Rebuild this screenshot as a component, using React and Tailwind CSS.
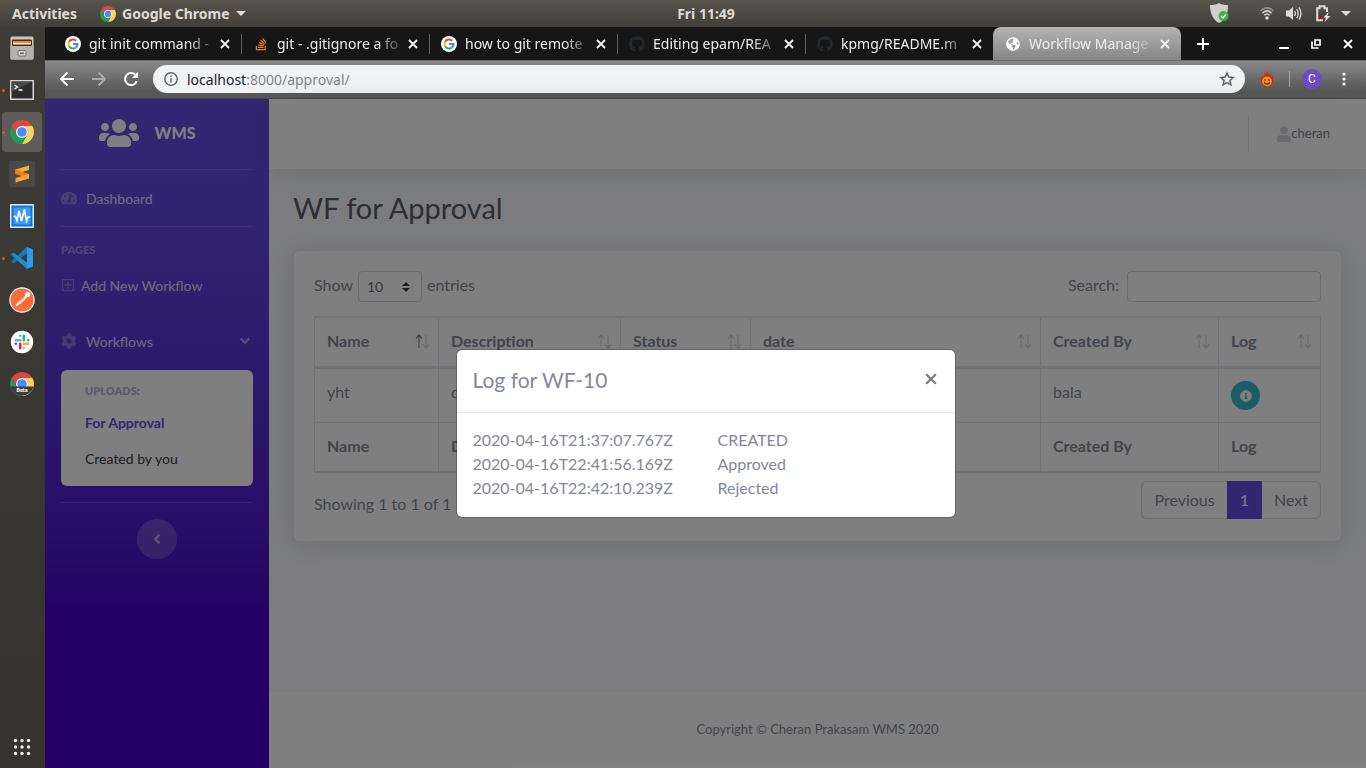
import React from "react";
import {
  FaUsers, FaTachometerAlt, FaCog, FaAngleDown, FaAngleLeft, FaInfoCircle, FaUser,
  FaRegPlusSquare, FaStackOverflow, FaGithub, FaGlobeAmericas,
} from "react-icons/fa";

function ChromeLogo({ className, beta }) {
  const arc = "M-17.32-10A20 20 0 0 1 17.32-10L0-10A10 10 0 0 0-8.66 5Z";
  return (
    <svg viewBox="-20 -20 40 40" className={className} aria-hidden="true">
      <path d={arc} fill="#d94a3e" />
      <path d={arc} fill="#fdd35c" transform="rotate(120)" />
      <path d={arc} fill="#229a58" transform="rotate(240)" />
      <circle r="10" fill="#fff" />
      <circle r="8" fill="#4c8bf5" />
      {beta && (
        <g>
          <path d="M-19.4 4H19.4A20 20 0 0 1-19.4 4Z" fill="#3c3c3c" />
          <text x="0" y="14" fontSize="9" fontWeight="700" fill="#fff" textAnchor="middle" fontFamily="Roboto, sans-serif">Beta</text>
        </g>
      )}
    </svg>
  );
}

function GoogleIcon() {
  return (
    <svg viewBox="0 0 16 16" className="size-4" aria-hidden="true">
      <circle cx="8" cy="8" r="8" fill="#fff" />
      <g fill="none" strokeWidth="2">
        <path d="M4.1 5.7A4.6 4.6 0 0 1 11.2 4.7" stroke="#ea4335" />
        <path d="M4.1 10.3A4.6 4.6 0 0 1 4.1 5.7" stroke="#fbbc05" />
        <path d="M11 11.5A4.6 4.6 0 0 1 4.1 10.3" stroke="#34a853" />
        <path d="M8 8H12.6A4.6 4.6 0 0 1 11 11.5" stroke="#4285f4" />
      </g>
    </svg>
  );
}

function CloseIcon({ className }) {
  return (
    <svg viewBox="0 0 10 10" className={className} fill="none" stroke="currentColor" strokeWidth="1.9" aria-hidden="true">
      <path d="M1 1L9 9M9 1L1 9" />
    </svg>
  );
}

const tabs = [
  { title: "git init command -", icon: <GoogleIcon /> },
  { title: "git - .gitignore a fo", icon: <FaStackOverflow className="size-3.5 text-[#f48024]" /> },
  { title: "how to git remote", icon: <GoogleIcon /> },
  { title: "Editing epam/REA", icon: <FaGithub className="size-4 text-[#24292e]" /> },
  { title: "kpmg/README.m", icon: <FaGithub className="size-4 text-[#24292e]" /> },
];

function Tab({ tab, active, separator }) {
  const look = active ? "rounded-t-lg bg-linear-to-b from-[#b4b4b4] to-[#868686]" : "";
  return (
    <div className={"relative flex w-[188px] min-w-0 items-center pl-3 pr-[11px] " + look}>
      <span className="flex size-4 shrink-0 items-center justify-center">{tab.icon}</span>
      <span className="ml-2 min-w-0 flex-1 overflow-hidden whitespace-nowrap mask-r-from-80% mask-r-to-105% text-[14px] text-[#eeeeee]">
        {tab.title}
      </span>
      <button type="button" aria-label="Close tab" className="ml-2 shrink-0 text-[#eeeeee]">
        <CloseIcon className="size-2.5" />
      </button>
      {separator && <span className="absolute -right-px h-5 w-px bg-[#606060]" />}
    </div>
  );
}

function SystemBar() {
  return (
    <header className="flex h-[27px] items-center bg-linear-to-b from-[#58554d] to-[#403e39] px-3 text-[14px] font-bold text-[#dfdbd2]">
      <div className="flex flex-1 items-center">
        <button type="button" className="font-bold">Activities</button>
        <button type="button" className="ml-[23px] flex items-center font-bold">
          <ChromeLogo className="size-4" />
          <span className="ml-1.5">Google Chrome</span>
          <svg viewBox="0 0 10 5" className="ml-1.5 h-[5px] w-2.5" fill="currentColor" aria-hidden="true"><path d="M0 0H10L5 5Z" /></svg>
        </button>
      </div>
      <time className="pl-[46px]">Fri 11:49</time>
      <div className="flex flex-1 items-center justify-end">
        <svg viewBox="0 0 20 21" className="h-[21px] w-5" aria-hidden="true">
          <path d="M9 0C11 1.6 14 2 18 2C18 10 16 17 9 20C3 17 0 10 0 2C4 2 7 1.6 9 0Z" fill="#d2d0cc" />
          <circle cx="13.5" cy="13" r="5" fill="#39b54a" />
          <path d="M11 13L13 15L16 11.5" fill="none" stroke="#fff" strokeWidth="1.2" />
        </svg>
        <svg viewBox="0 0 14 13" className="ml-[30px] h-[13px] w-3.5" fill="none" stroke="currentColor" strokeWidth="1.6" aria-hidden="true">
          <path d="M0.5 4Q7-2.4 13.5 4" opacity=".45" />
          <path d="M2.4 6.2Q7 1.6 11.6 6.2" /><path d="M4.3 8.3Q7 5.6 9.7 8.3" />
          <circle cx="7" cy="11" r="1.8" fill="currentColor" stroke="none" />
        </svg>
        <svg viewBox="0 0 16 15" className="ml-3 h-[15px] w-4" fill="none" stroke="currentColor" strokeWidth="1.3" aria-hidden="true">
          <path d="M0 4.5H3L7 1V14L3 10.5H0Z" fill="currentColor" stroke="none" />
          <path d="M8.6 5Q10.2 7.5 8.6 10M10.8 3Q13.6 7.5 10.8 12M13 1.4Q16.8 7.5 13 13.6" />
        </svg>
        <svg viewBox="0 0 15 17" className="ml-3.5 h-[17px] w-[15px]" aria-hidden="true">
          <path d="M7 15.2H1.2V3.2H3.5V1.2H8.5V3.2H11V7" fill="none" stroke="currentColor" strokeWidth="2" />
          <rect x="3" y="11" width="4" height="2.5" fill="#d40000" />
          <path d="M12.5 7L7.5 12.5H10L8.5 17L14.5 11H11.5Z" fill="currentColor" />
        </svg>
        <svg viewBox="0 0 10 5" className="ml-2.5 mr-[3px] h-[5px] w-2.5" fill="currentColor" aria-hidden="true"><path d="M0 0H10L5 5Z" /></svg>
      </div>
    </header>
  );
}

const dockApps = [
  {
    name: "Files",
    icon: (
      <svg viewBox="0 0 24 24" className="size-6">
        <rect x=".5" y=".5" width="23" height="23" rx="1.5" fill="#c9c7c4" />
        <rect x="2" y="3.5" width="20" height="6.5" rx="1" fill="#4d2a1a" />
        <path d="M3 5H21V7H3Z" fill="#f6853d" /><path d="M3 7H21V8.5H3Z" fill="#fff1e0" />
        <path d="M0.5 10H23.5V22Q23.5 23.5 22 23.5H2Q.5 23.5 .5 22Z" fill="#b5b3b0" />
        <rect x="8" y="14.5" width="8" height="5.5" rx="1" fill="#d9d9d9" stroke="#6e6e6e" /><path d="M10 17.3H14" stroke="#555" strokeWidth="1.3" />
      </svg>
    ),
  },
  {
    name: "Terminal", running: true,
    icon: (
      <svg viewBox="0 0 24 20" className="h-5 w-6">
        <rect width="24" height="20" fill="#d7d7d7" /><rect x="1.5" y="1.5" width="21" height="17" fill="#2c2c2c" />
        <path d="M1.5 1.5H22.5L1.5 12Z" fill="#4a4a4a" />
        <path d="M4.5 5L7.5 7L4.5 9M8.5 10H12.5" fill="none" stroke="#fff" strokeWidth="1.4" />
      </svg>
    ),
  },
  { name: "Google Chrome", running: true, active: true, icon: <ChromeLogo className="size-6" /> },
  {
    name: "Sublime Text",
    icon: (
      <svg viewBox="0 0 26 26" className="size-[26px]">
        <rect width="26" height="26" rx="2" fill="#494949" />
        <path d="M20 4.5L6.5 8.5V13L20 9Z" fill="#ffab30" /><path d="M6.5 8.5V13L20 17.5V13Z" fill="#e8861b" /><path d="M20 13V17.5L6.5 21.5V17Z" fill="#ffa22a" />
      </svg>
    ),
  },
  {
    name: "System Monitor",
    icon: (
      <svg viewBox="0 0 24 24" className="size-6">
        <rect width="24" height="24" rx="1" fill="#dcecff" /><rect x="1.5" y="1.5" width="21" height="21" fill="#1272dc" />
        <rect x="3.5" y="3.5" width="17" height="17" fill="#3d9bf3" />
        <path d="M3.5 12.5H5.5L7 16.5L9 7L11.5 17L14.5 5.5L16.5 17L18 13H20.5" fill="none" stroke="#fff" strokeWidth="1.6" />
      </svg>
    ),
  },
  {
    name: "Visual Studio Code", running: true,
    icon: (
      <svg viewBox="0 0 24 24" className="size-6">
        <path d="M17 1L23 3.5V20.5L17 23L6 12Z" fill="#2f9be8" />
        <path d="M17 7V17L10.5 12Z" fill="#3b3a35" />
        <path d="M17 1V7L3.5 17.5L1 15.5Z" fill="#1478bd" /><path d="M17 23V17L3.5 6.5L1 8.5Z" fill="#1f8bd4" />
      </svg>
    ),
  },
  {
    name: "Postman",
    icon: (
      <svg viewBox="0 0 26 26" className="size-[26px]">
        <circle cx="13" cy="13" r="12.7" fill="#fff" /><circle cx="13" cy="13" r="11.6" fill="#fb6b3b" />
        <path d="M6 20L9 15L16 9L18 10.5L11 17Z" fill="#fff" /><circle cx="18.5" cy="7.5" r="2.6" fill="#fff" />
        <path d="M9 16L15 11" stroke="#fb6b3b" strokeWidth=".8" />
      </svg>
    ),
  },
  {
    name: "Slack",
    icon: (
      <svg viewBox="0 0 24 24" className="size-6">
        <circle cx="12" cy="12" r="11.2" fill="#fff" />
        <g strokeWidth="2.6" strokeLinecap="round">
          <path d="M10.2 5.8V5.81M5.8 10.2H10.2" stroke="#36c5f0" />
          <path d="M18.2 10.2H18.21M13.8 5.8V10.2" stroke="#2eb67d" />
          <path d="M13.8 18.2V18.21M13.8 13.8H18.2" stroke="#ecb22e" />
          <path d="M5.8 13.8H5.81M10.2 13.8V18.2" stroke="#e01e5a" />
        </g>
      </svg>
    ),
  },
  { name: "Google Chrome Beta", icon: <ChromeLogo className="size-6" beta /> },
];

function Dock() {
  return (
    <nav aria-label="Dock" className="flex w-[45px] shrink-0 flex-col items-center bg-linear-to-b from-[#3d3c37] to-[#34332e] pb-2.5 pr-px">
      <div className="flex flex-col gap-0.5 pt-px">
        {dockApps.map((app) => (
          <button
            key={app.name}
            type="button"
            aria-label={app.name}
            className={"relative flex size-10 items-center justify-center rounded " + (app.active ? "bg-[#5d5c58]" : "")}
          >
            {app.running && <span className="absolute left-0 size-[3px] rounded-full bg-[#e95420]" />}
            {app.icon}
          </button>
        ))}
      </div>
      <button type="button" aria-label="Show applications" className="mt-auto">
        <svg viewBox="0 0 22 22" className="size-[22px]" fill="#f2f2f2">
          {[4.5, 11, 17.5].map((y) => [4.5, 11, 17.5].map((x) => <circle key={x + "-" + y} cx={x} cy={y} r="1.7" />))}
        </svg>
      </button>
    </nav>
  );
}

function BrowserChrome() {
  return (
    <div>
      <div className="flex h-[33px] bg-[#161616] pl-2">
        {tabs.map((tab, i) => <Tab key={tab.title} tab={tab} separator={i < 4} />)}
        <Tab active tab={{ title: "Workflow Manage", icon: <FaGlobeAmericas className="size-3.5 text-white" /> }} />
        <div className="flex flex-1 items-center pl-4 pr-3 text-white">
          <button type="button" aria-label="New tab">
            <svg viewBox="0 0 12 12" className="size-3" stroke="currentColor" strokeWidth="2"><path d="M6 0V12M0 6H12" /></svg>
          </button>
          <div className="ml-auto flex items-center gap-[22px]">
            <button type="button" aria-label="Minimize">
              <svg viewBox="0 0 10 10" className="size-2.5" stroke="currentColor" strokeWidth="2"><path d="M0 9H10" /></svg>
            </button>
            <button type="button" aria-label="Restore">
              <svg viewBox="0 0 10 10" className="size-2.5" fill="none" stroke="currentColor" strokeWidth="1.7"><path d="M4 1H9V6H4ZM1 2.5V9H7.5" /></svg>
            </button>
            <button type="button" aria-label="Close window" className="mr-px"><CloseIcon className="size-2.5" /></button>
          </div>
        </div>
      </div>
      <div className="flex h-[39px] items-center border-b border-[#454545] border-t border-t-[#6a6a6a] bg-linear-to-b from-[#8a8a8a] to-[#585858] to-80% pl-[14px] pr-5 pb-px">
        <div className="flex gap-4 text-white">
          <button type="button" aria-label="Back">
            <svg viewBox="0 0 16 16" className="size-4" fill="none" stroke="currentColor" strokeWidth="2"><path d="M15 8H2M8.5 1.5L2 8L8.5 14.5" /></svg>
          </button>
          <button type="button" aria-label="Forward" className="text-[#a9a9a9]">
            <svg viewBox="0 0 16 16" className="size-4" fill="none" stroke="currentColor" strokeWidth="2"><path d="M1 8H14M7.5 1.5L14 8L7.5 14.5" /></svg>
          </button>
          <button type="button" aria-label="Reload">
            <svg viewBox="0 0 16 16" className="size-4" fill="none" stroke="currentColor" strokeWidth="2"><path d="M13.8 10A6 6 0 1 1 12.3 3.8" /><path d="M15 .8V7H8.8Z" fill="currentColor" stroke="none" /></svg>
          </button>
        </div>
        <div className="ml-[14px] flex h-7 flex-1 items-center rounded-full bg-[#f1f3f4] pl-[11px] pr-2.5">
          <svg viewBox="0 0 14 14" className="size-3.5" fill="none" stroke="#5f6368" strokeWidth="1.4" aria-hidden="true"><circle cx="7" cy="7" r="6.2" /><path d="M7 6V10.5M7 3.5V5" /></svg>
          <div className="ml-[9px] flex-1 text-[14px] text-[#80868b]"><span className="text-[#202124]">localhost</span>:8000/approval/</div>
          <button type="button" aria-label="Bookmark">
            <svg viewBox="0 0 24 24" className="size-4" fill="none" stroke="#5f6368" strokeWidth="2.2"><path d="M12 3L14.7 9.1L21.3 9.8L16.4 14.2L17.8 20.7L12 17.3L6.2 20.7L7.6 14.2L2.7 9.8L9.3 9.1Z" /></svg>
          </button>
        </div>
        <button type="button" aria-label="Extension" className="ml-3.5">
          <svg viewBox="0 0 16 16" className="size-4">
            <path d="M2 7L3.5 5L4 6.5L5.5 2.5L6.5 4L7.5 0L10 4L11.5 2.5L12 6L14 5V10A6 5.8 0 0 1 2 10Z" fill="#e01f0c" />
            <circle cx="8" cy="10.3" r="4.9" fill="#fb9a12" />
            <path d="M6 8V10M10 8V10M5 11.5Q8 14.5 11 11.5" fill="none" stroke="#6b2500" strokeWidth="1.2" />
          </svg>
        </button>
        <span className="ml-3.5 h-4 w-px bg-[#a3a3a3]" />
        <button type="button" aria-label="Profile" className="ml-3 flex size-5 items-center justify-center rounded-full bg-[#6a4fc7] font-[Roboto] text-[12px] text-white">C</button>
        <button type="button" aria-label="Menu" className="ml-5">
          <svg viewBox="0 0 4 14" className="h-3.5 w-1" fill="#fff"><circle cx="2" cy="2" r="1.6" /><circle cx="2" cy="7" r="1.6" /><circle cx="2" cy="12" r="1.6" /></svg>
        </button>
      </div>
    </div>
  );
}

function Sidebar() {
  return (
    <nav aria-label="Main" className="flex w-56 shrink-0 flex-col bg-linear-to-b from-[#654de6] from-10% to-[#4800c8] to-78% px-4 text-[14px] text-white/80">
      <a href="#home" className="flex h-[71px] items-center justify-center gap-4 border-b border-white/15 pr-5 pb-0.5 text-[16px] font-black text-white">
        <FaUsers className="h-8 w-10" />
        <span>WMS</span>
      </a>
      <a href="#dashboard" className="flex h-[57px] items-center gap-[9px] border-b border-white/15">
        <FaTachometerAlt className="size-4 text-white/30" />
        Dashboard
      </a>
      <div className="mt-[15px] h-4 text-[11px] leading-4 font-extrabold text-white/40">PAGES</div>
      <a href="#new" className="mt-[11px] flex h-8 items-center gap-1.5">
        <FaRegPlusSquare className="size-3.5 text-white/30" />
        Add New Workflow
      </a>
      <a href="#workflows" className="mt-6 flex h-8 items-center gap-[9px]">
        <FaCog className="size-4 text-white/30" />
        <span className="flex-1">Workflows</span>
        <FaAngleDown className="size-4 text-white/50" />
      </a>
      <div className="mt-[13px] rounded-md bg-white pb-[13px]">
        <div className="px-6 pt-[13px] pb-2 text-[11px] leading-4 font-extrabold text-[#b7b9cc]">UPLOADS:</div>
        <a href="#approval" className="flex h-[30px] items-center px-6 font-bold text-[#654de6]">For Approval</a>
        <a href="#created" className="mt-1.5 flex h-[30px] items-center px-6 text-[#3a3b45]">Created by you</a>
      </div>
      <hr className="mt-4 border-white/15" />
      <button type="button" aria-label="Collapse sidebar" className="mx-auto mt-4 flex size-10 items-center justify-center rounded-full bg-white/20 text-white/50">
        <FaAngleLeft className="size-4" />
      </button>
    </nav>
  );
}

function SortArrows({ asc }) {
  return (
    <svg viewBox="0 0 15 15" className="size-[15px]" fill="none" stroke="#858796" strokeWidth="1.2" aria-hidden="true">
      <path d="M4 14V1M1 4.5L4 1L7 4.5" opacity={asc ? 1 : 0.35} />
      <path d="M11 1V14M8 10.5L11 14L14 10.5" opacity=".35" />
    </svg>
  );
}

const columns = ["Name", "Description", "Status", "date", "Created By", "Log"];
const cell = "border-t border-r border-[#e3e6f0] px-3 pt-[11px] pb-[13px] text-left align-top last:border-r-0";
const field = "h-[31px] rounded border border-[#d1d3e2] bg-white text-[#6e707e]";

function WorkflowTable() {
  return (
    <table className="my-1.5 w-full table-fixed border-separate border-spacing-0 border border-[#e3e6f0]">
      <colgroup>
        <col className="w-[124px]" /><col className="w-[182px]" /><col className="w-[130px]" />
        <col className="w-[290px]" /><col className="w-[178px]" /><col />
      </colgroup>
      <thead>
        <tr>
          {columns.map((name, i) => (
            <th key={name} className={cell + " border-b-2 pr-2"}>
              <span className="flex items-center justify-between">{name}<SortArrows asc={i === 0} /></span>
            </th>
          ))}
        </tr>
      </thead>
      <tbody>
        <tr>
          <td className={cell}>yht</td>
          <td className={cell}>desc</td>
          <td className={cell} />
          <td className={cell} />
          <td className={cell}>bala</td>
          <td className={cell}>
            <button type="button" aria-label="Show log" className="mt-px -mb-px flex size-[29px] items-center justify-center rounded-full bg-[#36b9cc] text-white">
              <FaInfoCircle className="size-3" />
            </button>
          </td>
        </tr>
      </tbody>
      <tfoot>
        <tr>{columns.map((name) => <th key={name} className={cell + " border-b"}>{name}</th>)}</tr>
      </tfoot>
    </table>
  );
}

function Content() {
  return (
    <div className="flex min-w-0 flex-1 flex-col bg-[#f8f9fc] text-[16px] text-[#858796]">
      <header className="flex h-[70px] items-center justify-end bg-white pr-9 shadow-[0_2px_28px_rgba(58,59,69,0.15)]">
        <span className="mr-7 h-[38px] w-px bg-[#e3e6f0]" />
        <a href="#profile" className="flex items-center text-[13px]">
          <FaUser className="h-4 w-3.5 text-[#d1d3e2]" />
          <span>cheran</span>
        </a>
      </header>
      <main className="flex-1 px-6 pt-6">
        <h1 className="mb-[27px] text-[29px] leading-[30px] text-[#5a5c69]">WF for Approval</h1>
        <section className="rounded-md border border-[#e3e6f0] bg-white p-5 shadow-[0_2px_28px_rgba(58,59,69,0.15)]">
          <div className="mb-3.5 flex justify-between">
            <label className="flex items-start gap-[5px] leading-7">
              Show
              <span className="relative flex items-center">
                <select defaultValue="10" className={field + " w-16 appearance-none px-2 text-[14px]"}>
                  <option>10</option><option>25</option><option>50</option>
                </select>
                <svg viewBox="0 0 8 10" className="pointer-events-none absolute right-3 h-2.5 w-2" fill="#3a3b45" aria-hidden="true"><path d="M0 4L4 0L8 4ZM0 6L4 10L8 6Z" /></svg>
              </span>
              entries
            </label>
            <label className="flex items-start gap-2 leading-7">
              Search:
              <input type="search" className={field + " w-[194px] px-2 text-[14px]"} />
            </label>
          </div>
          <WorkflowTable />
          <div className="flex items-start justify-between pt-0.5 pb-0.5">
            <p className="pt-[11px]">Showing 1 to 1 of 1</p>
            <div className="flex h-[38px] text-[#858796]">
              <button type="button" className="rounded-l-md border border-r-0 border-[#dddfeb] px-3">Previous</button>
              <button type="button" aria-current="page" className="border border-[#654de6] bg-[#654de6] px-3 text-white">1</button>
              <button type="button" className="rounded-r-md border border-l-0 border-[#dddfeb] px-3">Next</button>
            </div>
          </div>
        </section>
      </main>
      <footer className="flex h-[76px] items-center justify-center bg-white text-[13px]">Copyright © Cheran Prakasam WMS 2020</footer>
    </div>
  );
}

const log = [
  ["2020-04-16T21:37:07.767Z", "CREATED"],
  ["2020-04-16T22:41:56.169Z", "Approved"],
  ["2020-04-16T22:42:10.239Z", "Rejected"],
];

function LogDialog() {
  return (
    <div className="absolute inset-0 flex items-center justify-center bg-black/50">
      <div role="dialog" aria-labelledby="log-title" className="w-[500px] rounded-md border border-black/20 bg-white bg-clip-padding text-[16px] text-[#858796]">
        <div className="flex items-start justify-between border-b border-[#e3e6f0] px-4 pt-[15px] pb-[17px]">
          <h2 id="log-title" className="text-[21px] leading-[30px]">Log for WF-10</h2>
          <button type="button" aria-label="Close" className="mt-2 mr-0.5 text-[#7c7c7c]"><CloseIcon className="size-3" /></button>
        </div>
        <table className="mx-4 mt-[15px] mb-[17px]">
          <tbody>
            {log.map(([time, status]) => (
              <tr key={time}>
                <td className="w-[245px] p-0">{time}</td>
                <td className="p-0">{status}</td>
              </tr>
            ))}
          </tbody>
        </table>
      </div>
    </div>
  );
}

export default function App() {
  return (
    <div className="flex min-h-screen flex-col font-['Noto_Sans',sans-serif]">
      <SystemBar />
      <div className="flex flex-1">
        <Dock />
        <div className="flex min-w-0 flex-1 flex-col">
          <BrowserChrome />
          <div className="relative flex flex-1 font-[Lato,sans-serif]">
            <Sidebar />
            <Content />
            <LogDialog />
          </div>
        </div>
      </div>
    </div>
  );
}
